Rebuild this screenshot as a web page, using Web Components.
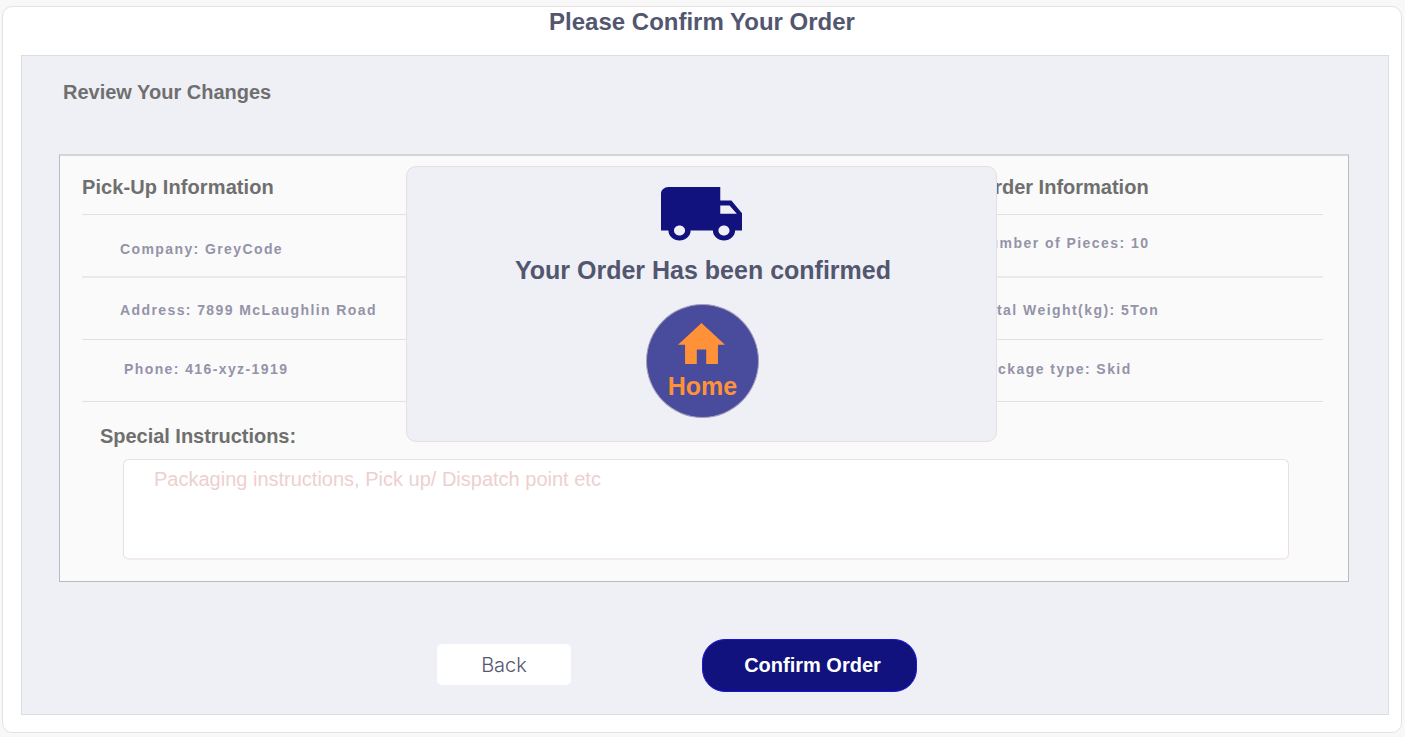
<!DOCTYPE html>
<html lang="en">
<head>
<meta charset="utf-8">
<title>Please Confirm Your Order</title>
<style>
html,body{margin:0;height:100%;overflow:hidden}
body{background:#f8f8f8;font-family:"Liberation Sans",Arial,sans-serif}
</style>
</head>
<body>
<order-page></order-page>
<script>
const define = (name, markup) => {
  const template = document.createElement('template');
  template.innerHTML = markup;
  customElements.define(name, class extends HTMLElement {
    constructor() {
      super();
      this.attachShadow({mode: 'open'}).append(template.content.cloneNode(true));
    }
  });
};

define('section-title', `<style>
:host{display:block;font-size:20px;font-weight:700;line-height:24px;color:#6f6f6f;white-space:nowrap}
</style><slot></slot>`);

define('info-cell', `<style>
:host{display:block;font-size:14px;font-weight:700;line-height:16px;letter-spacing:1.4px;color:#9493a8;white-space:nowrap}
</style><slot></slot>`);

define('info-row', `<style>
:host{display:grid;grid-template-columns:896px 1fr;box-sizing:border-box;border-bottom:1px solid #e0e0e1}
</style><slot></slot>`);

define('icon-truck', `<style>
:host{display:block;width:82px;height:54px}svg{display:block;width:81.5px;height:53.5px}
</style><svg viewBox="1 4 22 16" preserveAspectRatio="none" fill="#11127e"><path d="M20 8h-3V4H3c-1.1 0-2 .9-2 2v11h2c0 1.66 1.34 3 3 3s3-1.34 3-3h6c0 1.66 1.34 3 3 3s3-1.34 3-3h2v-5l-3-4zM6 18.5c-.83 0-1.5-.67-1.5-1.5s.67-1.5 1.5-1.5 1.5.67 1.5 1.5-.67 1.5-1.5 1.5zm13.5-9l1.96 2.5H17V9.5h2.5zm-1.5 9c-.83 0-1.5-.67-1.5-1.5s.67-1.5 1.5-1.5 1.5.67 1.5 1.5-.67 1.5-1.5 1.5z"/></svg>`);

define('icon-home', `<style>
:host{display:block;width:47px;height:41px}svg{display:block;width:100%;height:100%}
</style><svg viewBox="2 3 20 17" preserveAspectRatio="none" fill="#ff9138"><path d="M10 20v-6h4v6h5v-8h3L12 3 2 12h3v8z"/></svg>`);

define('home-button', `<style>
:host{display:block}
button{display:flex;flex-direction:column;align-items:center;width:113px;height:114px;box-sizing:border-box;padding:18px 0 0;border:1px solid #a9a0be;border-radius:50%;background:#494b9c;color:#ff9138;font:700 25px/28px "Liberation Sans",Arial,sans-serif}
icon-home{margin:0 2px 8px 0}
</style><button type="button"><icon-home></icon-home><slot></slot></button>`);

define('confirm-dialog', `<style>
:host{position:absolute;left:406px;top:166px;width:591px;height:276px;box-sizing:border-box;display:flex;flex-direction:column;align-items:center;border:1px solid #e7dee3;border-radius:10px;background:#eff0f6;padding-top:20px}
h2{margin:15px 0 19px 3px;font-size:25px;line-height:29px;font-weight:700;color:#53566f;white-space:nowrap}
home-button{margin-left:2px}
</style><icon-truck></icon-truck><h2><slot></slot></h2><home-button>Home</home-button>`);

define('instructions-box', `<style>
:host{display:block;box-sizing:border-box;width:1166px;height:101px;border:1px solid #ebdfe1;border-bottom:2px solid #f2ecec;border-radius:6px;background:#fff;padding:7px 30px;font-size:20px;line-height:24px;color:#edd0d0}
</style><slot></slot>`);

define('order-summary', `<style>
:host{display:block;box-sizing:border-box;width:1290px;height:428px;border:1px solid #bbbbbf;border-top:2px solid #d3d4d8;background:#fafafa;padding:0 25px 0 22px}
.head{height:59px;padding-top:19px}
.head section-title:first-child{letter-spacing:.1px}
.head section-title:last-child{padding-left:.6px}
.r1{height:63px;border-bottom:2px solid #eaeaeb}.r2{height:62px}.r3{height:62px}
.r1 info-cell:first-child{padding:26px 0 0 38px}
.r1 info-cell:last-child{padding-top:20px}
.r2 info-cell:first-child{padding:24px 0 0 38px}
.r2 info-cell:last-child{padding:24px 0 0}
.r3 info-cell:first-child{padding:21px 0 0 42px}
.r3 info-cell:last-child{padding-top:21px}
info-cell:last-child{letter-spacing:1.45px}
.special{margin:22px 0 11px 18px;letter-spacing:-.03px}
instructions-box{margin-left:41px}
</style>
<info-row class="head"><section-title>Pick-Up Information</section-title><section-title>Order Information</section-title></info-row>
<info-row class="r1"><info-cell>Company: GreyCode</info-cell><info-cell>Number of Pieces: 10</info-cell></info-row>
<info-row class="r2"><info-cell>Address: 7899 McLaughlin Road</info-cell><info-cell>Total Weight(kg): 5Ton</info-cell></info-row>
<info-row class="r3"><info-cell>Phone: 416-xyz-1919</info-cell><info-cell>Package type: Skid</info-cell></info-row>
<section-title class="special">Special Instructions:</section-title>
<instructions-box>Packaging instructions, Pick up/ Dispatch point etc</instructions-box>`);

define('order-actions', `<style>
:host{display:flex;align-items:flex-start;gap:131px;height:53px}
button{box-sizing:border-box;border:0;padding:0;white-space:nowrap}
.back{margin-top:5px;width:134px;height:41px;border-radius:5px;background:#fff;color:#53566f;font:300 20px/24px Inter,"Liberation Sans",sans-serif}
.ok{width:215px;height:53px;border-radius:23px;border:1px solid #1a13da;background:#11127e;color:#fff;font:700 20px/24px "Liberation Sans",Arial,sans-serif;padding:0 0 2px 6px}
</style><button class="back" type="button">Back</button><button class="ok" type="button">Confirm Order</button>`);

define('order-page', `<style>
:host{display:block;position:relative;width:1405px;height:737px;box-sizing:border-box;padding:6px 3px 4px 2px}
main{height:727px;box-sizing:border-box;border:1px solid #eadfe1;border-radius:10px;background:#fff;padding:0 12px 0 18px}
h1{margin:0;height:48px;box-sizing:border-box;padding:1px 0 0 2px;text-align:center;font-size:24px;line-height:28px;font-weight:700;color:#53566f;width:1360px}
section{width:1368px;height:660px;box-sizing:border-box;border:1px solid #dcdce7;background:#eff0f6;padding:24px 0 0 37px}
.review{margin:0 0 50px 4px}
order-actions{margin:57px 0 0 378px}
</style>
<main><h1>Please Confirm Your Order</h1>
<section><section-title class="review">Review Your Changes</section-title>
<order-summary></order-summary>
<order-actions></order-actions></section></main>
<confirm-dialog>Your Order Has been confirmed</confirm-dialog>`);
</script>
</body>
</html>
